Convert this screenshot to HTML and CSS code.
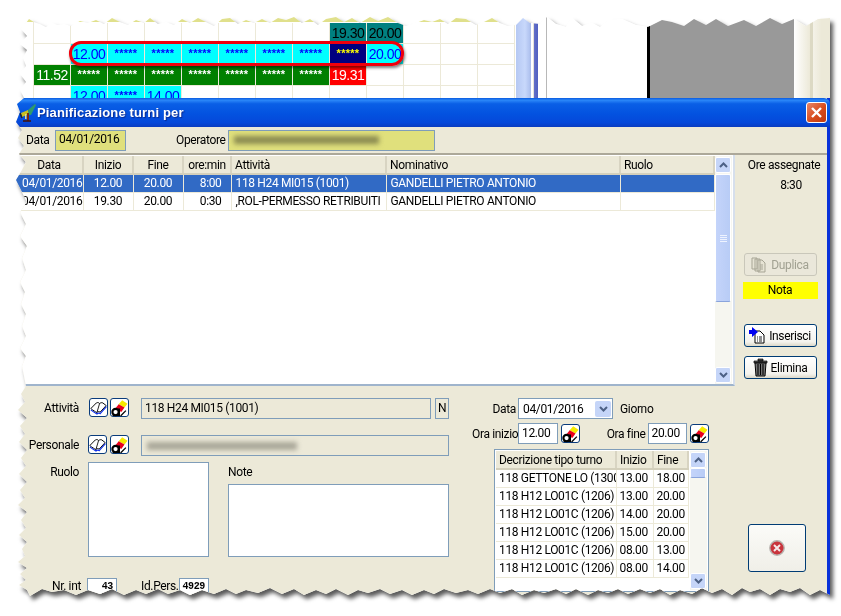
FILE: index.html

```html
<!DOCTYPE html>
<html lang="it">
<head>
  <meta charset="UTF-8">
  <title>Pianificazione turni per</title>
  <link rel="stylesheet" href="styles.css">
</head>
<body>
  <svg class="defs" width="0" height="0">
    <symbol id="book" viewBox="0 0 16 16">
      <path d="M.8 8.500 6 3.200c1.200-.6 2.300-.3 3 .6 1-.8 2.200-1 3-.6l3.200 2.500-5.700 6.200c-1.200-.8-2.200-.6-3 .4C5 11.500 3.200 10.500.8 8.500z" fill="#fff" stroke="#000" stroke-width=".9"/>
      <path d="M9 3.800 6.500 12.300" stroke="#000" stroke-width=".8" fill="none"/>
      <path d="M.8 9.800c2.300 2 4.200 3 5.700 3.900.8-1 1.800-1.200 3-.4l6-6.500" stroke="#1030e8" stroke-width="1.100" fill="none"/>
    </symbol>
    <symbol id="eraser" viewBox="0 0 16 16">
      <path d="M10.500.8 15.500 4l-2.800 3.600L7.200 4.400z" fill="#f6ea00"/>
      <path d="M7.200 4.400l5.500 3.200-3 4.200-5.600-3.400z" fill="#e8001c"/>
      <path d="M1 3h6L3 8.500 1 7zM12 10l3-2v7h-4z" fill="#fff"/>
      <circle cx="4.300" cy="11.800" r="3" fill="none" stroke="#000" stroke-width="2"/>
      <path d="M6.500 8.500h2v7h-7v-1.500h5z" fill="#000"/>
      <path d="M9 15.500l5-5" stroke="#000" stroke-width="1.200"/>
    </symbol>
  </svg>

  <div class="page">
    <div class="shot">
      <div class="desk">
        <div class="desk-main">
          <div class="khaki"></div>
          <div class="cal">
            <div class="c"></div><div class="c"></div><div class="c"></div><div class="c"></div><div class="c"></div><div class="c"></div><div class="c"></div><div class="c"></div>
            <div class="c teal">19.30</div><div class="c teal">20.00</div><div class="c"></div><div class="c"></div><div class="c"></div>

            <div class="c"></div><div class="c cyan">12.00</div><div class="c cyan st">*****</div><div class="c cyan st">*****</div><div class="c cyan st">*****</div><div class="c cyan st">*****</div><div class="c cyan st">*****</div><div class="c cyan st">*****</div>
            <div class="c navy st">*****</div><div class="c cyan">20.00</div><div class="c"></div><div class="c"></div><div class="c"></div>

            <div class="c green">11.52</div><div class="c green st">*****</div><div class="c green st">*****</div><div class="c green st">*****</div><div class="c green st">*****</div><div class="c green st">*****</div><div class="c green st">*****</div><div class="c green st">*****</div>
            <div class="c red">19.31</div><div class="c"></div><div class="c"></div><div class="c"></div><div class="c"></div>

            <div class="c"></div><div class="c cyan">12.00</div><div class="c cyan st">*****</div><div class="c cyan">14.00</div><div class="c"></div><div class="c"></div><div class="c"></div><div class="c"></div>
            <div class="c"></div><div class="c"></div><div class="c"></div><div class="c"></div><div class="c"></div>
          </div>
        </div>
        <div class="desk-sb"></div>
        <div class="desk-line"></div>
        <div class="desk-white"></div>
        <div class="desk-grey"></div>
        <div class="desk-pale"></div>
        <div class="desk-end"></div>
      </div>
      <div class="ring"></div>

      <div class="win">
        <div class="title">
          <svg class="app-ico" width="20" height="20" viewBox="0 0 20 20">
            <path d="M3 10l7-3 1 4-7 3z" fill="#c8c020"/>
            <path d="M10 7l7-6 1 1-5 10-2 0z" fill="#2f9a6a"/>
            <path d="M12 3l3-2 1 1z" fill="#1a5fb0"/>
            <path d="M9 10h2v8H9z" fill="#7a2a10"/>
            <path d="M7 11h1.500v5H7z" fill="#e0d890"/>
            <path d="M5 18h8" stroke="#401008" stroke-width="1.500"/>
            <path d="M2 10l2 5" stroke="#222" stroke-width="1.500"/>
          </svg>
          <span class="title-text">Pianificazione turni per</span>
          <div class="close">
            <svg width="13" height="13" viewBox="0 0 13 13"><path d="M2 2l9 9M11 2l-9 9" stroke="#fff" stroke-width="2.400"/></svg>
          </div>
        </div>

        <div class="top-bar">
          <span class="lbl-data">Data</span>
          <span class="khaki-in date-in">04/01/2016</span>
          <span class="lbl-op">Operatore</span>
          <span class="khaki-in op-in"><i class="smudge"></i></span>
        </div>

        <div class="mid">
          <div class="list">
            <table class="tbl main-tbl">
              <colgroup><col class="w67"><col class="w50"><col class="w50"><col class="w48"><col class="w155"><col class="w234"><col class="w94"></colgroup>
              <tr><th class="ctr">Data</th><th class="ctr">Inizio</th><th class="ctr">Fine</th><th class="ctr">ore:min</th><th>Attività</th><th>Nominativo</th><th>Ruolo</th></tr>
              <tr class="sel"><td class="date">04/01/2016</td><td class="ctr">12.00</td><td class="ctr">20.00</td><td class="rgt">8:00</td><td>118 H24 MI015 (1001)</td><td>GANDELLI PIETRO ANTONIO</td><td></td></tr>
              <tr><td class="date">04/01/2016</td><td class="ctr">19.30</td><td class="ctr">20.00</td><td class="rgt">0:30</td><td>,ROL-PERMESSO RETRIBUITI</td><td>GANDELLI PIETRO ANTONIO</td><td></td></tr>
            </table>
            <div class="sb">
              <div class="sb-btn"><svg width="9" height="6" viewBox="0 0 9 6"><path d="M1 5l3.500-3.500L8 5" fill="none" stroke="#4d6185" stroke-width="2"/></svg></div>
              <div class="sb-thumb big"><i></i><i></i><i></i><i></i></div>
              <div class="sb-track"></div>
              <div class="sb-btn"><svg width="9" height="6" viewBox="0 0 9 6"><path d="M1 1l3.500 3.500L8 1" fill="none" stroke="#4d6185" stroke-width="2"/></svg></div>
            </div>
          </div>

          <div class="side">
            <div class="ore-lbl">Ore assegnate</div>
            <div class="ore-val">8:30</div>
            <button class="btn off dup">
              <svg width="17" height="17" viewBox="0 0 17 17"><path d="M1 2h5v11H1zM4 3h5v12H4zM7 4h4l3 3v9H7z" fill="#e6e3d4" stroke="#a7a595"/><path d="M9 9h3M9 11h3M9 13h3" stroke="#a7a595"/></svg>
              Duplica
            </button>
            <div class="nota">Nota</div>
            <button class="btn ins">
              <svg width="17" height="17" viewBox="0 0 17 17"><path d="M6 4h5l4 4v8H6z" fill="#fff" stroke="#000"/><path d="M8 10h1m1 0h3M8 12h1m1 0h3M8 14h1m1 0h3" stroke="#222"/><path d="M0 3h3V0l6 5-6 5V7H0z" fill="#0000f0"/></svg>
              Inserisci
            </button>
            <button class="btn eli">
              <svg width="15" height="19" viewBox="0 0 15 19"><path d="M5 1h5v2H5zM1 3h13v2H1z" fill="#555" stroke="#000" stroke-width=".7"/><path d="M2 5h11l-1 13H3z" fill="#777" stroke="#000"/><path d="M5 6v11M7.500 6v11M10 6v11" stroke="#000" stroke-width="1.100"/></svg>
              Elimina
            </button>
          </div>
        </div>

        <div class="form">
          <div class="form-left">
            <div class="row">
              <span class="lbl">Attività</span>
              <div class="ico-pair">
                <span class="ico"><svg width="18" height="18"><use href="#book"/></svg></span>
                <span class="ico"><svg width="18" height="18"><use href="#eraser"/></svg></span>
              </div>
              <span class="fld act">118 H24 MI015 (1001)</span>
              <span class="fld flag">N</span>
            </div>
            <div class="row pers">
              <span class="lbl">Personale</span>
              <div class="ico-pair wide">
                <span class="ico"><svg width="18" height="18"><use href="#book"/></svg></span>
                <span class="ico"><svg width="18" height="18"><use href="#eraser"/></svg></span>
              </div>
              <span class="fld name"><i class="smudge grey"></i></span>
            </div>
            <div class="row boxes">
              <span class="lbl">Ruolo</span>
              <div class="box ruolo"></div>
              <div class="note-col">
                <span class="note-lbl">Note</span>
                <div class="box note"></div>
              </div>
            </div>
            <div class="row last">
              <span class="lbl small">Nr. int</span>
              <span class="mono">43</span>
              <span class="lbl-id">Id.Pers.</span>
              <span class="mono">4929</span>
            </div>
          </div>

          <div class="form-right">
            <div class="r-row">
              <span class="r-lbl">Data</span>
              <div class="select"><span>04/01/2016</span>
                <b class="sel-btn"><svg width="9" height="6" viewBox="0 0 9 6"><path d="M1 1l3.500 3.500L8 1" fill="none" stroke="#4d6185" stroke-width="2"/></svg></b>
              </div>
              <span class="giorno">Giorno</span>
            </div>
            <div class="r-row times">
              <span class="r-lbl">Ora inizio</span>
              <span class="time">12.00</span>
              <span class="ico"><svg width="18" height="18"><use href="#eraser"/></svg></span>
              <span class="r-lbl fine">Ora fine</span>
              <span class="time">20.00</span>
              <span class="ico"><svg width="18" height="18"><use href="#eraser"/></svg></span>
            </div>
            <div class="turni">
              <table class="tbl tipo-tbl">
                <colgroup><col class="w120"><col class="w37"><col class="w35"></colgroup>
                <tr><th>Decrizione tipo turno</th><th>Inizio</th><th>Fine</th></tr>
                <tr><td>118 GETTONE LO (1300)</td><td>13.00</td><td>18.00</td></tr>
                <tr><td>118 H12 LO01C (1206)</td><td>13.00</td><td>20.00</td></tr>
                <tr><td>118 H12 LO01C (1206)</td><td>14.00</td><td>20.00</td></tr>
                <tr><td>118 H12 LO01C (1206)</td><td>15.00</td><td>20.00</td></tr>
                <tr><td>118 H12 LO01C (1206)</td><td>08.00</td><td>13.00</td></tr>
                <tr><td>118 H12 LO01C (1206)</td><td>08.00</td><td>14.00</td></tr>
              </table>
              <div class="sb">
                <div class="sb-btn"><svg width="9" height="6" viewBox="0 0 9 6"><path d="M1 5l3.500-3.500L8 5" fill="none" stroke="#4d6185" stroke-width="2"/></svg></div>
                <div class="sb-thumb tiny"></div>
                <div class="sb-track"></div>
                <div class="sb-btn"><svg width="9" height="6" viewBox="0 0 9 6"><path d="M1 1l3.500 3.500L8 1" fill="none" stroke="#4d6185" stroke-width="2"/></svg></div>
              </div>
            </div>
          </div>

          <button class="btn stop">
            <svg width="16" height="16" viewBox="0 0 16 16"><circle cx="8" cy="8" r="7.200" fill="#c9343c" stroke="#b8b4b0" stroke-width="1.400"/><path d="M5 5l6 6M11 5l-6 6" stroke="#f6e8e8" stroke-width="2"/></svg>
          </button>
        </div>
      </div>
    </div>
  </div>
</body>
</html>
```

FILE: styles.css

```css
* {
  box-sizing: border-box;
}
html, body {
  margin: 0;
  padding: 0;
  background: #fff;
  overflow: hidden;
}
body {
  font-family: Roboto, "Liberation Sans", Arial, sans-serif;
  font-size: 12px;
  letter-spacing: -0.35px;
  color: #000;
}
.defs {
  position: absolute;
}
.page {
  width: 841px;
  height: 616px;
  filter: drop-shadow(3px 4px 2px rgba(0, 0, 0, 0.65));
}
/* torn paper edge */
.shot {
  position: relative;
  width: 841px;
  height: 616px;
  overflow: hidden;
  background: #fff;
  clip-path: polygon(
    26px 23px, 29px 19px, 34px 22px, 40px 24px, 46px 27px, 52px 23px, 58px 25px, 64px 24px, 71px 26px, 80px 21px, 88px 23px, 96px 20px, 104px 24px, 112px 18px, 120px 22px, 128px 25px, 136px 20px, 144px 23px, 150px 18px, 158px 24px, 166px 22px, 174px 25px, 182px 19px, 190px 23px, 198px 18px, 206px 22px, 214px 26px, 222px 19px, 230px 18px, 238px 24px, 246px 20px, 254px 23px, 262px 19px, 270px 23px, 278px 18px, 286px 20px, 294px 17px, 302px 23px, 310px 19px, 318px 25px, 326px 19px, 336px 17px, 344px 22px, 352px 18px, 360px 23px, 370px 17px, 378px 21px, 388px 17px, 398px 23px, 406px 26px, 416px 23px, 424px 20px, 432px 22px, 440px 19px, 448px 24px, 456px 18px, 466px 19px, 476px 25px, 484px 22px, 492px 18px, 500px 23px, 508px 26px, 516px 25px, 523px 18px, 530px 23px, 540px 24px, 547px 17px, 556px 24px, 566px 27px, 572px 18px, 582px 26px, 592px 23px, 600px 27px, 610px 20px, 622px 19px, 636px 25px, 648px 27px, 662px 20px, 672px 22px, 684px 26px, 694px 19px, 706px 25px, 716px 19px, 728px 26px, 744px 20px, 756px 26px, 770px 18px, 782px 24px, 794px 19px, 806px 26px, 818px 19px, 830px 18px,
    830px 595px,
    820px 590px, 810px 595px, 800px 588px, 790px 592px, 780px 589px, 770px 595px, 760px 589px, 750px 592px, 742px 588px, 732px 595px, 722px 589px, 712px 593px, 702px 588px, 692px 594px, 680px 590px, 670px 595px, 660px 589px, 650px 593px, 640px 589px, 628px 594px, 618px 589px, 608px 593px, 598px 590px, 588px 595px, 576px 589px, 566px 594px, 556px 589px, 544px 593px, 534px 590px, 522px 595px, 512px 589px, 500px 593px, 490px 589px, 478px 594px, 468px 590px, 456px 593px, 444px 589px, 434px 594px, 424px 590px, 412px 595px, 402px 590px, 390px 594px, 380px 589px, 368px 593px, 358px 590px, 348px 595px, 336px 589px, 326px 594px, 316px 590px, 304px 595px, 294px 589px, 282px 594px, 270px 588px, 258px 593px, 246px 590px, 236px 594px, 226px 589px, 214px 594px, 202px 590px, 190px 595px, 180px 590px, 168px 594px, 158px 589px, 146px 594px, 136px 590px, 124px 595px, 112px 589px, 100px 594px, 88px 590px, 76px 595px, 64px 590px, 52px 592px, 42px 589px, 30px 596px,
    27px 590px, 19px 585px, 26px 580px, 20px 574px, 27px 568px, 18px 562px, 25px 556px, 22px 549px, 27px 542px, 19px 535px, 26px 528px, 21px 520px, 27px 512px, 18px 505px, 25px 498px, 20px 490px, 27px 482px, 19px 474px, 26px 466px, 21px 458px, 27px 450px, 19px 442px, 25px 434px, 20px 426px, 27px 418px, 18px 410px, 25px 402px, 21px 394px, 26px 386px, 24px 376px, 22px 366px, 26px 356px, 20px 348px, 26px 336px, 22px 326px, 26px 314px, 21px 304px, 25px 292px, 20px 282px, 26px 270px, 22px 258px, 27px 246px, 20px 236px, 26px 224px, 20px 212px, 27px 202px, 22px 192px, 16px 180px, 22px 170px, 26px 162px, 19px 154px, 24px 146px, 18px 138px, 22px 130px, 16px 122px, 20px 112px, 17px 104px, 24px 98px, 20px 90px, 26px 82px, 20px 74px, 26px 66px, 23px 58px, 27px 50px, 20px 44px, 27px 36px, 21px 29px
  );
}

/* application behind the dialog */
.desk {
  display: flex;
  height: 130px;
}
.desk-main {
  width: 516px;
}
.khaki {
  height: 22px;
  margin-left: 25px;
  width: 480px;
  background: #e0e08c;
}
.cal {
  display: grid;
  grid-template-columns: repeat(13, 37px);
  grid-auto-rows: 21px;
  margin-left: 33px;
  border-left: 1px solid #ece9d8;
  width: 482px;
  padding-top: 1px;
}
.c {
  border-right: 1px solid #ece9d8;
  border-bottom: 1px solid #ece9d8;
  font-family: "Liberation Sans", Arial, sans-serif;
  font-size: 14px;
  letter-spacing: -0.5px;
  line-height: 20px;
  text-align: center;
  white-space: nowrap;
  overflow: hidden;
}
.st {
  font-size: 11px;
  font-weight: bold;
  letter-spacing: 0.3px;
  line-height: 18px;
}
.teal {
  background: #008080;
  color: #000;
}
.cyan {
  background: #00ffff;
  color: #0000ff;
}
.navy {
  background: #000080;
  color: #ffff00;
}
.green {
  background: #008000;
  color: #fff;
}
.red {
  background: #ff0000;
  color: #fff;
}
.desk-sb {
  width: 15px;
  background: linear-gradient(90deg, #b5c8f3, #c8d8fb 60%, #a9bcec);
}
.desk-line {
  width: 15px;
  background: linear-gradient(90deg, #fff 2px, #e4e2d8 2px, #e4e2d8 3px, #6470c8 3px, #5060c0 7px, #fff 7px);
}
.desk-white {
  width: 101px;
  border-left: 1px solid #b8b8b8;
  background: #fff;
}
.desk-grey {
  width: 147px;
  border-left: 3px solid #000;
  background: #999;
}
.desk-pale {
  width: 19px;
  background: linear-gradient(90deg, #fff, #ece9d8);
  border-right: 3px solid #dcd9c4;
}
.desk-end {
  flex: 1;
  background: linear-gradient(90deg, #f4f2e8, #ece9d8 30%);
}
.ring {
  position: absolute;
  left: 69px;
  top: 41px;
  width: 335px;
  height: 25px;
  border: 3.500px solid #f0000c;
  border-radius: 12px;
  box-shadow: 1px 2px 3px rgba(0, 0, 0, 0.5);
}

/* dialog */
.win {
  position: absolute;
  left: 16px;
  top: 98px;
  width: 814px;
  height: 518px;
  background: #ece9d8;
  border-right: 3px solid #0831d9;
}
.title {
  height: 29px;
  display: flex;
  align-items: center;
  padding: 0 3px 0 2px;
  border-radius: 6px 6px 0 0;
  margin-right: -3px;
  background: linear-gradient(180deg, #0a5be0 0%, #2a86f8 8%, #0a5fe6 20%, #0352e0 55%, #0548da 85%, #0a3cc0 100%);
}
.app-ico {
  flex: none;
}
.title-text {
  margin-left: -1px;
  color: #fff;
  font-family: "Liberation Sans", Arial, sans-serif;
  font-weight: bold;
  font-size: 13px;
  letter-spacing: 0.15px;
  text-shadow: 1px 1px 1px #0a2a90;
}
.close {
  margin-left: auto;
  width: 21px;
  height: 21px;
  display: flex;
  align-items: center;
  justify-content: center;
  border: 1px solid #fff;
  border-radius: 3px;
  background: linear-gradient(135deg, #e8866a, #d84c1c 55%, #c03a10);
}
.top-bar {
  height: 28px;
  display: flex;
  align-items: center;
  padding-left: 10px;
  border-bottom: 2px solid #aca899;
}
.lbl-data {
  width: 29px;
}
.khaki-in {
  height: 21px;
  background: #e0e07c;
  border: 1px solid #7f9db9;
  padding-left: 3px;
  line-height: 17px;
}
.date-in {
  width: 71px;
}
.lbl-op {
  margin-left: 50px;
  width: 52px;
}
.op-in {
  width: 207px;
  overflow: hidden;
}
.smudge {
  display: block;
  width: 145px;
  height: 8px;
  margin: 5px 0 0 2px;
  background: #8a8a50;
  filter: blur(2.500px);
}
.smudge.grey {
  width: 150px;
  margin: 6px 0 0 2px;
  background: #a8a698;
}
.mid {
  display: flex;
  height: 231px;
}
.list {
  width: 719px;
  display: flex;
  justify-content: space-between;
  background: #fff;
  border-right: 2px solid #d6dfec;
  border-bottom: 2px solid #9fb4cc;
  padding: 1px 1px 0 0;
}
.tbl {
  border-collapse: collapse;
  table-layout: fixed;
  align-self: flex-start;
}
.w67 { width: 67px; }
.w50 { width: 50px; }
.w48 { width: 48px; }
.w155 { width: 155px; }
.w234 { width: 234px; }
.w94 { width: 94px; }
.w120 { width: 120px; }
.w37 { width: 37px; }
.w35 { width: 35px; }
.main-tbl {
  width: 698px;
}
.tbl th {
  height: 18px;
  padding: 0 3px;
  font-weight: normal;
  text-align: left;
  background: #ece9d8;
  border-right: 2px solid #d8d4c2;
  border-bottom: 2px solid #d4d0bc;
  white-space: nowrap;
  overflow: hidden;
}
.tbl td {
  height: 18px;
  padding: 0 4px;
  white-space: nowrap;
  overflow: hidden;
  border-right: 1px solid #ece9d8;
  border-bottom: 1px solid #ece9d8;
}
.tbl th.ctr,
.tbl td.ctr {
  text-align: center;
}
.tbl td.rgt {
  text-align: right;
  padding-right: 9px;
}
.tbl td.date {
  padding: 0 3px 0 6px;
  text-align: left;
}
.sel td {
  background: #316ac5;
  color: #fff;
}
.sb {
  width: 17px;
  display: flex;
  flex-direction: column;
  flex: none;
  padding: 1px 1px 1px 0;
  background: #f6f6f0;
}
.sb-btn {
  height: 16px;
  flex: none;
  display: flex;
  align-items: center;
  justify-content: center;
  border: 1px solid #fff;
  border-radius: 2px;
  background: #c5d5f8;
}
.sb-thumb {
  flex: none;
  border: 1px solid #fff;
  border-bottom-color: #8aa4dc;
  border-radius: 2px;
  background: linear-gradient(90deg, #c4d4fa, #b8ccf6);
  display: flex;
  flex-direction: column;
  align-items: center;
  justify-content: center;
  gap: 1px;
}
.sb-thumb i {
  display: block;
  width: 7px;
  height: 1px;
  background: #eef3ff;
}
.big {
  height: 128px;
  margin-top: 1px;
}
.tiny {
  height: 10px;
}
.sb-track {
  flex: 1;
}
.side {
  flex: 1;
  display: flex;
  flex-direction: column;
  align-items: center;
  padding-top: 3px;
}
.ore-lbl {
  height: 14px;
  margin-left: 6px;
}
.ore-val {
  margin: 6px 0 0 20px;
  height: 14px;
}
.btn {
  display: flex;
  align-items: center;
  justify-content: center;
  gap: 3px;
  padding: 0;
  font-family: inherit;
  font-size: 12px;
  letter-spacing: inherit;
  color: #000;
  background: linear-gradient(180deg, #fff, #f4f3ee 80%, #dcd8c8);
  border: 1px solid #003c74;
  border-radius: 3px;
}
.side .btn {
  width: 73px;
  height: 23px;
  margin-left: -2px;
}
.off {
  color: #a1a192;
  border-color: #c9c7ba;
  background: #eae7da;
}
.dup {
  margin-top: 61px;
}
.nota {
  width: 75px;
  height: 17px;
  margin: 6px 0 0 -2px;
  background: #ffff00;
  text-align: center;
  line-height: 17px;
}
.ins {
  margin-top: 25px;
}
.eli {
  margin-top: 9px;
}
.form {
  display: flex;
  align-items: flex-start;
  padding-top: 12px;
}
.form-left {
  width: 433px;
}
.row {
  display: flex;
  align-items: flex-start;
}
.lbl {
  width: 63px;
  text-align: right;
  line-height: 20px;
  flex: none;
}
.ico-pair {
  display: flex;
  gap: 2px;
  margin-left: 10px;
  width: 52px;
}
.ico-pair.wide {
  margin-left: 9px;
  gap: 3px;
  width: 53px;
}
.ico {
  width: 19px;
  height: 19px;
  flex: none;
  display: flex;
  align-items: center;
  justify-content: center;
  background: #fff;
  border: 1px solid #0a3c7c;
  border-radius: 3px;
}
.fld {
  height: 21px;
  background: #ece9d8;
  border: 1px solid #7f9db9;
  line-height: 18px;
  padding-left: 3px;
  white-space: nowrap;
}
.act {
  width: 290px;
}
.flag {
  width: 14px;
  margin-left: 4px;
  padding-left: 2px;
}
.name {
  width: 308px;
  overflow: hidden;
}
.pers {
  margin-top: 16px;
}
.boxes {
  margin-top: 6px;
}
.box {
  background: #fff;
  border: 1px solid #7f9db9;
}
.ruolo {
  width: 121px;
  height: 95px;
  margin-left: 9px;
}
.note-col {
  margin-left: 19px;
}
.note-lbl {
  display: block;
  height: 22px;
  line-height: 20px;
}
.note {
  width: 221px;
  height: 73px;
}
.last {
  margin-top: 21px;
}
.small {
  width: 65px;
  padding-top: 1px;
  line-height: 15px;
}
.mono {
  width: 30px;
  height: 22px;
  margin-left: 6px;
  background: #fff;
  border: 1px solid #7f9db9;
  font-family: "Liberation Mono", monospace;
  font-size: 10px;
  font-weight: bold;
  line-height: 16px;
  text-align: right;
  padding-right: 3px;
}
.lbl-id {
  width: 38px;
  margin-left: 24px;
  line-height: 17px;
  margin-right: -6px;
}
.form-right {
  width: 237px;
  margin-left: 23px;
}
.r-row {
  display: flex;
  align-items: center;
}
.r-lbl {
  width: 44px;
  margin-right: 2px;
  text-align: right;
  white-space: nowrap;
  flex: none;
}
.select {
  width: 95px;
  height: 21px;
  display: flex;
  align-items: center;
  justify-content: space-between;
  padding: 0 1px 0 4px;
  background: #fff;
  border: 1px solid #7f9db9;
}
.sel-btn {
  width: 16px;
  height: 16px;
  display: flex;
  align-items: center;
  justify-content: center;
  background: #c5d5f8;
  border-radius: 2px;
}
.giorno {
  margin-left: 7px;
}
.times {
  margin-top: 4px;
}
.time {
  width: 40px;
  height: 21px;
  background: #fff;
  border: 1px solid #7f9db9;
  padding-left: 3px;
  line-height: 18px;
  margin-right: 3px;
}
.r-lbl.fine {
  width: 43px;
  margin-left: 23px;
}
.turni {
  display: flex;
  justify-content: space-between;
  width: 215px;
  height: 143px;
  margin: 5px 0 0 22px;
  background: #fff;
  border: 1px solid #7f9db9;
  padding: 1px;
}
.tipo-tbl {
  width: 192px;
}
.tipo-tbl td {
  padding: 0 3px;
}
.stop {
  width: 58px;
  height: 48px;
  margin: 126px 0 0 39px;
  flex: none;
  background: linear-gradient(180deg, #fbfbf8, #f0efe8);
}
```
